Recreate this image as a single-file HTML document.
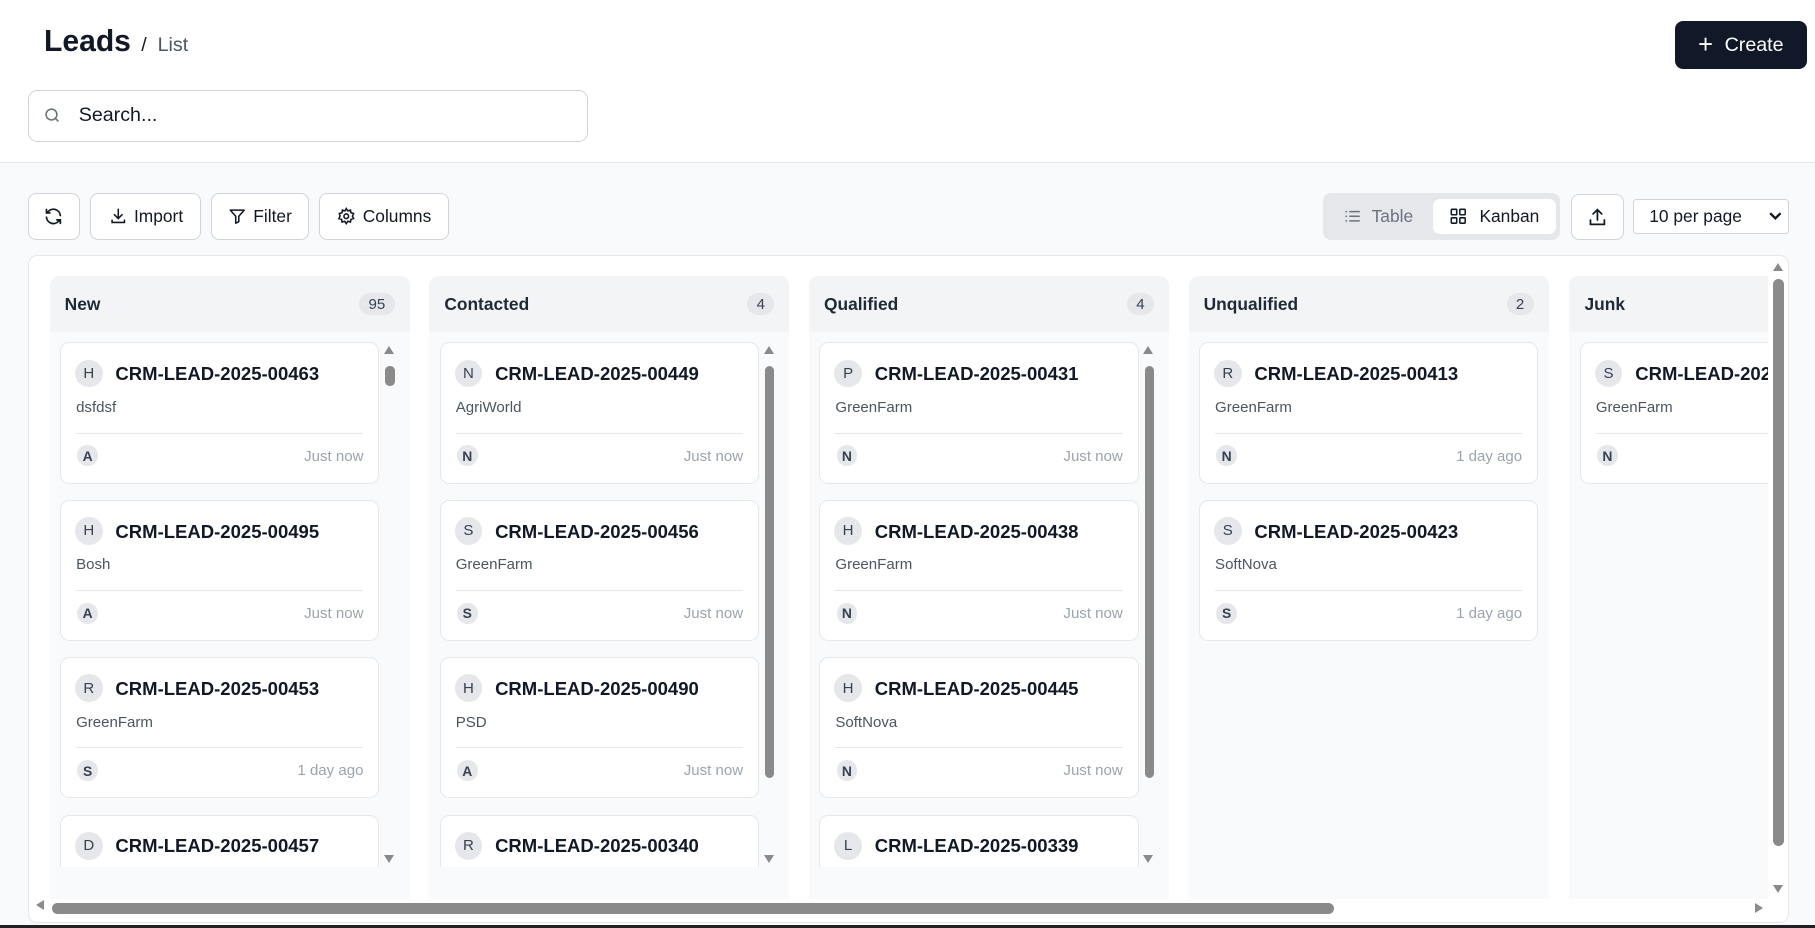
<!DOCTYPE html>
<html><head><meta charset="utf-8"><style>
html{zoom:1.1575}
*{box-sizing:border-box;margin:0;padding:0}
body{width:1568px;height:802px;overflow:hidden;font-family:"Liberation Sans",Arial,sans-serif;background:#fff;position:relative;color:#111827}
.a{position:absolute}
.btn{position:absolute;border:1px solid #d1d5db;border-radius:7px;background:#fff;display:flex;align-items:center;justify-content:center;gap:6px;font-size:15px;color:#111827}
.col{position:absolute;top:238px;width:311px;height:538px;background:#f9fafb;border-radius:8px 8px 0 0;overflow:hidden}
.ch{height:48px;background:#f3f4f6;display:flex;align-items:center;justify-content:space-between;padding:0 13px;font-size:15px;font-weight:bold;color:#1f2937}
.cnt{background:#e5e7eb;border-radius:10px;font-size:13px;font-weight:normal;color:#374151;padding:2px 8px}
.list{position:absolute;top:57px;left:9px;height:453px;overflow:hidden}
.card{position:relative;width:276px;height:122px;background:#fff;border:1px solid #e5e7eb;border-radius:8px;margin-bottom:14px}
.av{position:absolute;left:12px;top:14px;width:24px;height:24px;border-radius:50%;background:#e5e7eb;font-size:13px;color:#374151;display:flex;align-items:center;justify-content:center}
.id{position:absolute;left:47px;top:17px;font-size:16px;font-weight:bold;color:#111827;white-space:nowrap}
.co{position:absolute;left:13px;top:48px;font-size:13px;color:#4b5563}
.dv{position:absolute;left:13px;right:13px;top:77px;border-top:1px solid #e5e7eb}
.sa{position:absolute;left:14px;top:88px;width:18px;height:18px;border-radius:50%;background:#e5e7eb;font-size:12px;font-weight:bold;color:#374151;display:flex;align-items:center;justify-content:center}
.tm{position:absolute;right:13px;top:90px;font-size:13px;color:#9ca3af}
.sb{position:absolute;top:57px;left:289px;width:10px;height:453px}
.sb .up{position:absolute;top:3px;left:0;width:0;height:0;border-left:5px solid transparent;border-right:5px solid transparent;border-bottom:7px solid #8a8a8a}
.sb .dn{position:absolute;bottom:3px;left:0;width:0;height:0;border-left:5px solid transparent;border-right:5px solid transparent;border-top:7px solid #8a8a8a}
.sb .th{position:absolute;left:1px;width:8px;top:20px;border-radius:4px;background:#8a8a8a}
</style></head><body>
<div class="a" style="left:38px;top:22px;font-size:26px;font-weight:bold;color:#111827">Leads</div>
<div class="a" style="left:122px;top:29px;font-size:17px;color:#4b5563"><span style="color:#111827">/</span>&nbsp; List</div>
<div class="a" style="left:1447px;top:18px;width:114px;height:42px;background:#111827;border-radius:7px;color:#fff;font-size:17px;display:flex;align-items:center;justify-content:center;gap:10px"><span style="font-size:22px;font-weight:300">+</span>Create</div>
<div class="a" style="left:24px;top:78px;width:484px;height:45px;border:1px solid #d1d5db;border-radius:8px"></div>
<svg class="a" style="left:37px;top:92px" width="16" height="16" viewBox="0 0 24 24" fill="none" stroke="#6b7280" stroke-width="2"><circle cx="11" cy="11" r="7"/><path d="M20 20l-4-4"/></svg>
<div class="a" style="left:68px;top:90px;font-size:17px;color:#111827">Search...</div>
<div class="a" style="left:0;top:140px;width:1568px;height:662px;background:#f9fafb;border-top:1px solid #e5e7eb"></div>

<div class="btn" style="left:24px;top:167px;width:45px;height:40px"><svg width="18" height="18" viewBox="0 0 24 24" fill="none" stroke="#111827" stroke-width="2" stroke-linecap="round"><path d="M20 11a8 8 0 0 0-14-4.5L4 8M4 4v4h4M4 13a8 8 0 0 0 14 4.5l2-1.5M20 20v-4h-4"/></svg></div>
<div class="btn" style="left:78px;top:167px;width:96px;height:40px"><svg width="16" height="16" viewBox="0 0 24 24" fill="none" stroke="#111827" stroke-width="2" stroke-linecap="round"><path d="M12 3v12M7 10l5 5 5-5M4 17v3h16v-3"/></svg>Import</div>
<div class="btn" style="left:182px;top:167px;width:85px;height:40px"><svg width="16" height="16" viewBox="0 0 24 24" fill="none" stroke="#111827" stroke-width="2" stroke-linejoin="round"><path d="M3 4h18l-7 8v7l-4 2v-9z"/></svg>Filter</div>
<div class="btn" style="left:276px;top:167px;width:112px;height:40px"><svg width="16" height="16" viewBox="0 0 24 24" fill="none" stroke="#111827" stroke-width="2"><circle cx="12" cy="12" r="3"/><path d="M12 2l2 3 3.5-1 .5 3.5 3.5 1-1.5 3.5 1.5 3-3.5 1-.5 3.5-3.5-1-2 3-2-3-3.5 1-.5-3.5-3.5-1 1.5-3.5L3 8.5l3.5-1L7 4l3.5 1z"/></svg>Columns</div>

<div class="a" style="left:1143px;top:167px;width:205px;height:40px;background:#e5e7eb;border-radius:7px"></div>
<div class="a" style="left:1160px;top:178px;font-size:15px;color:#6b7280;display:flex;gap:9px;align-items:center"><svg width="16" height="16" viewBox="0 0 24 24" fill="none" stroke="#6b7280" stroke-width="2" stroke-linecap="round"><path d="M9 6h12M9 12h12M9 18h12M4 6h.5M4 12h.5M4 18h.5"/></svg>Table</div>
<div class="a" style="left:1238px;top:172px;width:106px;height:30px;background:#fff;border-radius:6px;font-size:15px;color:#111827;display:flex;align-items:center;justify-content:center;gap:10px"><svg width="16" height="16" viewBox="0 0 24 24" fill="none" stroke="#111827" stroke-width="2"><rect x="3" y="3" width="7" height="7" rx="1"/><rect x="14" y="3" width="7" height="7" rx="1"/><rect x="3" y="14" width="7" height="7" rx="1"/><rect x="14" y="14" width="7" height="7" rx="1"/></svg>Kanban</div>
<div class="btn" style="left:1357px;top:168px;width:46px;height:39px"><svg width="18" height="18" viewBox="0 0 24 24" fill="none" stroke="#111827" stroke-width="2" stroke-linecap="round"><path d="M12 15V3M7 8l5-5 5 5M4 15v5h16v-5"/></svg></div>
<div class="a" style="left:1411px;top:172px;width:135px;height:30px;background:#fff;border:1px solid #d1d5db;border-radius:3px;font-size:15px;display:flex;align-items:center;padding-left:13px;color:#111827">10 per page<svg style="position:absolute;right:6px;top:10px" width="11" height="8" viewBox="0 0 11 8" fill="none" stroke="#111827" stroke-width="2"><path d="M1 1l4.5 4.5L10 1"/></svg></div>

<div class="a" style="left:24px;top:220px;width:1522px;height:577px;background:#fff;border:1px solid #e5e7eb;border-radius:8px;overflow:hidden">
<div style="position:absolute;left:0;top:0;width:1503px;height:556px;overflow:hidden">
<div style="position:relative;left:-24px;top:-220px">

<div class="col" style="left:42px"><div class="ch">New<span class="cnt">95</span></div>
<div class="list">
<div class="card"><div class="av">H</div><div class="id">CRM-LEAD-2025-00463</div><div class="co">dsfdsf</div><div class="dv"></div><div class="sa">A</div><div class="tm">Just now</div></div>
<div class="card"><div class="av">H</div><div class="id">CRM-LEAD-2025-00495</div><div class="co">Bosh</div><div class="dv"></div><div class="sa">A</div><div class="tm">Just now</div></div>
<div class="card"><div class="av">R</div><div class="id">CRM-LEAD-2025-00453</div><div class="co">GreenFarm</div><div class="dv"></div><div class="sa">S</div><div class="tm">1 day ago</div></div>
<div class="card"><div class="av">D</div><div class="id">CRM-LEAD-2025-00457</div></div>
</div><div class="sb"><div class="up"></div><div class="th" style="height:18px"></div><div class="dn"></div></div></div>

<div class="col" style="left:370px"><div class="ch">Contacted<span class="cnt">4</span></div>
<div class="list">
<div class="card"><div class="av">N</div><div class="id">CRM-LEAD-2025-00449</div><div class="co">AgriWorld</div><div class="dv"></div><div class="sa">N</div><div class="tm">Just now</div></div>
<div class="card"><div class="av">S</div><div class="id">CRM-LEAD-2025-00456</div><div class="co">GreenFarm</div><div class="dv"></div><div class="sa">S</div><div class="tm">Just now</div></div>
<div class="card"><div class="av">H</div><div class="id">CRM-LEAD-2025-00490</div><div class="co">PSD</div><div class="dv"></div><div class="sa">A</div><div class="tm">Just now</div></div>
<div class="card"><div class="av">R</div><div class="id">CRM-LEAD-2025-00340</div></div>
</div><div class="sb"><div class="up"></div><div class="th" style="height:356px"></div><div class="dn"></div></div></div>

<div class="col" style="left:698px"><div class="ch">Qualified<span class="cnt">4</span></div>
<div class="list">
<div class="card"><div class="av">P</div><div class="id">CRM-LEAD-2025-00431</div><div class="co">GreenFarm</div><div class="dv"></div><div class="sa">N</div><div class="tm">Just now</div></div>
<div class="card"><div class="av">H</div><div class="id">CRM-LEAD-2025-00438</div><div class="co">GreenFarm</div><div class="dv"></div><div class="sa">N</div><div class="tm">Just now</div></div>
<div class="card"><div class="av">H</div><div class="id">CRM-LEAD-2025-00445</div><div class="co">SoftNova</div><div class="dv"></div><div class="sa">N</div><div class="tm">Just now</div></div>
<div class="card"><div class="av">L</div><div class="id">CRM-LEAD-2025-00339</div></div>
</div><div class="sb"><div class="up"></div><div class="th" style="height:356px"></div><div class="dn"></div></div></div>

<div class="col" style="left:1026px"><div class="ch">Unqualified<span class="cnt">2</span></div>
<div class="list">
<div class="card" style="width:293px"><div class="av">R</div><div class="id">CRM-LEAD-2025-00413</div><div class="co">GreenFarm</div><div class="dv"></div><div class="sa">N</div><div class="tm">1 day ago</div></div>
<div class="card" style="width:293px"><div class="av">S</div><div class="id">CRM-LEAD-2025-00423</div><div class="co">SoftNova</div><div class="dv"></div><div class="sa">S</div><div class="tm">1 day ago</div></div>
</div></div>

<div class="col" style="left:1355px"><div class="ch">Junk<span class="cnt">1</span></div>
<div class="list">
<div class="card" style="width:293px"><div class="av">S</div><div class="id">CRM-LEAD-2025-00401</div><div class="co">GreenFarm</div><div class="dv"></div><div class="sa">N</div><div class="tm">1 day ago</div></div>
</div></div>
</div></div>
<div class="a" style="left:1507px;top:6px;width:0;height:0;border-left:5px solid transparent;border-right:5px solid transparent;border-bottom:7px solid #8a8a8a"></div>
<div class="a" style="left:1507px;top:20px;width:9px;height:490px;border-radius:5px;background:#8a8a8a"></div>
<div class="a" style="left:1507px;top:544px;width:0;height:0;border-left:5px solid transparent;border-right:5px solid transparent;border-top:7px solid #8a8a8a"></div>
<div class="a" style="left:6px;top:557px;width:0;height:0;border-top:5px solid transparent;border-bottom:5px solid transparent;border-right:7px solid #8a8a8a"></div>
<div class="a" style="left:20px;top:559px;width:1108px;height:10px;border-radius:5px;background:#8a8a8a"></div>
<div class="a" style="left:1491px;top:559px;width:0;height:0;border-top:5px solid transparent;border-bottom:5px solid transparent;border-left:7px solid #8a8a8a"></div>
</div>
<div class="a" style="left:0;top:799px;width:1568px;height:3px;background:#222"></div>
</body></html>
